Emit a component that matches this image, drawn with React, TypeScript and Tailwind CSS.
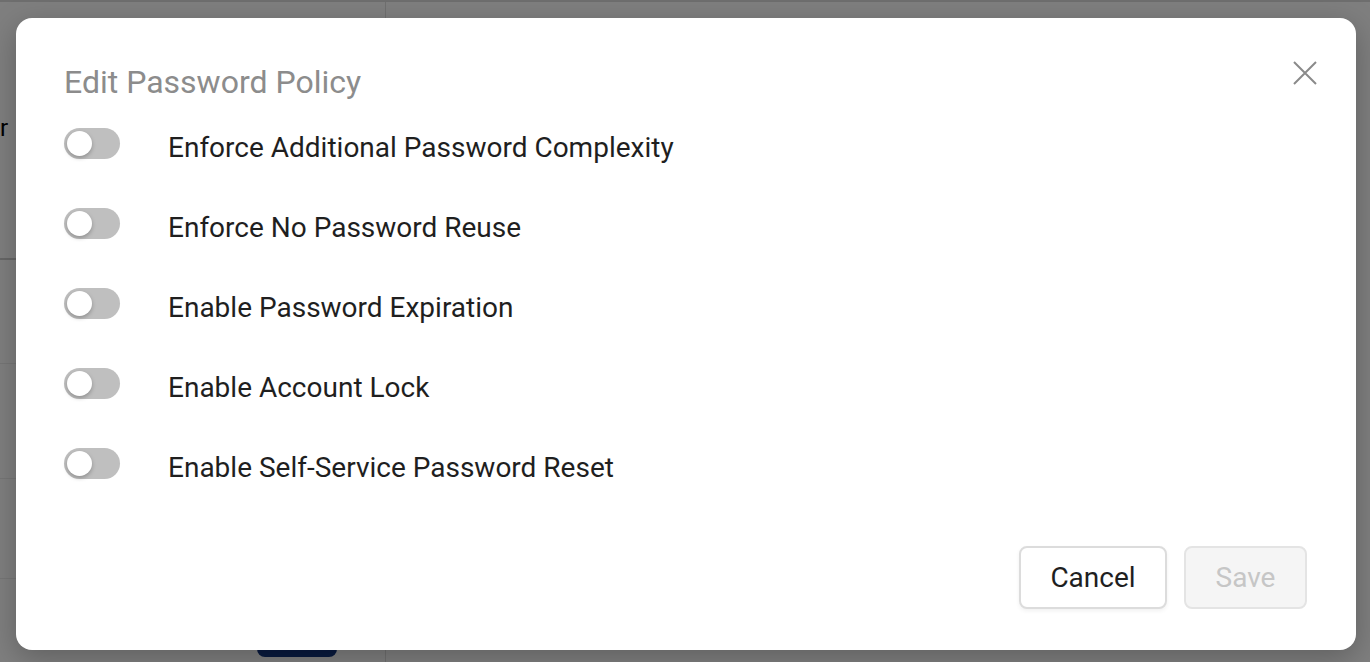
const policies = [
  "Enforce Additional Password Complexity",
  "Enforce No Password Reuse",
  "Enable Password Expiration",
  "Enable Account Lock",
  "Enable Self-Service Password Reset",
];

function Toggle() {
  return (
    <div className="flex h-[31px] w-[56px] shrink-0 items-center rounded-full bg-[#bfbfbf] px-[3px]">
      <div className="h-[25px] w-[25px] rounded-full bg-white shadow-[0_2px_4px_rgba(0,0,0,0.25)]" />
    </div>
  );
}

export default function App() {
  return (
    <div
      className="relative h-[662px] w-[1370px] overflow-hidden bg-white"
      style={{ fontFamily: "Roboto, 'Liberation Sans', sans-serif" }}
    >
      {/* page behind the dialog */}
      <div className="flex h-full border-t-2 border-[#dcdcdc]">
        <div className="flex w-[386px] flex-col border-r border-[#e0e0e0]">
          <div className="flex h-[256px] items-start pt-[114px]">
            <span className="text-[24px] leading-none text-black">r</span>
          </div>
          <div className="h-[105px] border-t-2 border-[#cfcfcf]" />
          <div className="h-[115px] border-t border-[#ececec]" />
          <div className="h-[100px] border-t border-[#ececec]" />
          <div className="flex h-[82px] items-end border-t border-[#ececec] pl-[257px]">
            <div className="mb-[3px] h-[30px] w-[80px] rounded-lg bg-[#12357f]" />
          </div>
        </div>
        <div className="flex-1" />
      </div>

      {/* overlay */}
      <div className="absolute inset-0 flex items-start bg-black/50 pl-4 pr-[14px] pt-[18px]">
        <div className="relative flex h-[632px] w-full flex-col rounded-2xl bg-white pl-12 pr-[49px] pt-12 shadow-[0_8px_30px_rgba(0,0,0,0.25)]">
          <h2 className="text-[32px] leading-8 text-[#8c8c8c]">Edit Password Policy</h2>
          <button className="absolute right-[39px] top-[43px] text-[#8a8a8a]">
            <svg width="24" height="24" viewBox="0 0 24 24" fill="none" stroke="currentColor" strokeWidth="2">
              <path d="M1 1L23 23M23 1L1 23" />
            </svg>
          </button>

          <div className="mt-[5px] flex flex-col">
            {policies.map((p) => (
              <div key={p} className="flex h-20 items-center gap-[48px]">
                <Toggle />
                <span className="pt-[10px] text-[28px] text-[#1f1f1f]">{p}</span>
              </div>
            ))}
          </div>

          <div className="mt-[43px] flex justify-end gap-[17px]">
            <button className="h-[63px] w-[148px] rounded-lg border-2 border-[#dcdcdc] bg-white text-[28px] text-[#1f1f1f] shadow-[0_2px_4px_rgba(0,0,0,0.06)]">
              Cancel
            </button>
            <button className="h-[63px] w-[123px] rounded-lg border-2 border-[#e4e4e4] bg-[#f5f5f5] text-[28px] text-[#c6c6c6]">
              Save
            </button>
          </div>
        </div>
      </div>
    </div>
  );
}
